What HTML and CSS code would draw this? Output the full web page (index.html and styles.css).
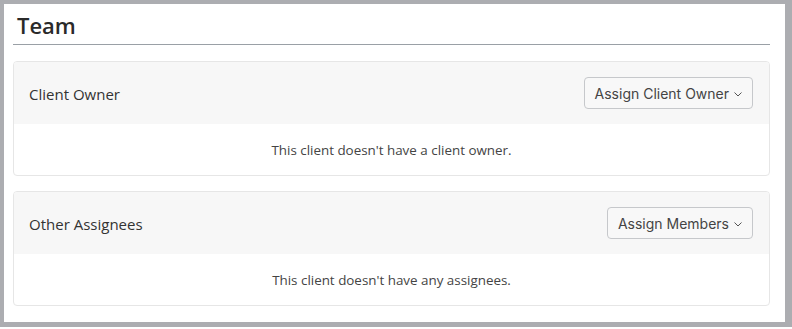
FILE: index.html
```html
<!DOCTYPE html>
<html lang="en">
<head>
<meta charset="UTF-8">
<title>Team</title>
<link rel="stylesheet" href="styles.css">
</head>
<body>
<div class="frame">
    <h2 class="titulo">Team</h2>

    <div class="card">
        <div class="card-header">
            <span class="card-title">Client Owner</span>
            <button class="btn-assign">Assign Client Owner
                <svg class="chev" width="8" height="5" viewBox="0 0 8 5"><path d="M0.5 0.5 L4 4 L7.5 0.5" fill="none" stroke="#555" stroke-width="1"/></svg>
            </button>
        </div>
        <div class="card-body">This client doesn't have a client owner.</div>
    </div>

    <div class="card">
        <div class="card-header">
            <span class="card-title">Other Assignees</span>
            <button class="btn-assign">Assign Members
                <svg class="chev" width="8" height="5" viewBox="0 0 8 5"><path d="M0.5 0.5 L4 4 L7.5 0.5" fill="none" stroke="#555" stroke-width="1"/></svg>
            </button>
        </div>
        <div class="card-body">This client doesn't have any assignees.</div>
    </div>
</div>
</body>
</html>
```

FILE: styles.css
```css
body {
    margin: 0;
    padding: 0;
    background-color: #ffffff;
    font-family: 'Open Sans', 'Noto Sans', sans-serif;
}

.frame {
    width: 757px;
    height: 318px;
    border-style: solid;
    border-color: #acadb1;
    border-width: 4px 7px 5px 4px;
    padding: 0 15px 0 9px;
}

.titulo {
    margin: 0;
    padding: 6px 0 4px 4px;
    font-size: 22px;
    font-weight: 600;
    line-height: 30px;
    color: #2a2a2a;
    border-bottom: 1px solid #9aa0a6;
    margin-bottom: 16px;
}

.card {
    border: 1px solid #e6e6e6;
    border-radius: 4px;
    margin-bottom: 15px;
    overflow: hidden;
}

.card-header {
    background-color: #f7f7f7;
    display: flex;
    justify-content: space-between;
    align-items: center;
    padding: 15px 16px 15px 15px;
}

.card-title {
    font-size: 15px;
    color: #333;
    padding-top: 2px;
}

.btn-assign {
    font-family: 'Inter', 'Roboto', sans-serif;
    font-size: 14px;
    color: #444;
    background-color: #f8f8f8;
    border: 1px solid #c6c8cb;
    border-radius: 4px;
    height: 32px;
    padding: 0 10px;
    display: flex;
    align-items: center;
    gap: 5px;
}

.chev {
    margin-top: 2px;
}

.card-body {
    text-align: center;
    font-size: 13.4px;
    color: #444;
    padding: 18px 0 16px;
    line-height: 17px;
}
```
